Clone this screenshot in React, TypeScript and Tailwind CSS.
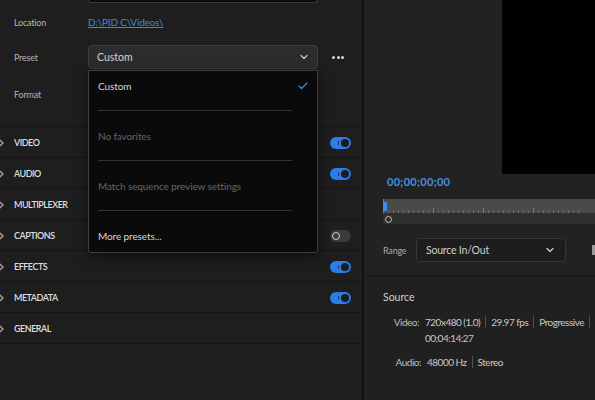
import { ChevronDown, Check } from 'lucide-react';

const sections = [
  { name: 'VIDEO', toggle: 'on' },
  { name: 'AUDIO', toggle: 'on' },
  { name: 'MULTIPLEXER', toggle: null },
  { name: 'CAPTIONS', toggle: 'off' },
  { name: 'EFFECTS', toggle: 'on' },
  { name: 'METADATA', toggle: 'on' },
  { name: 'GENERAL', toggle: null },
];

function Toggle({ on }: { on: boolean }) {
  if (on) {
    return (
      <div className="relative h-[12px] w-[21px] rounded-full bg-[#2b7de9]">
        <span className="absolute left-[8px] top-[4px] h-[4px] w-px bg-[#1c1c1c]/70" />
        <span className="absolute right-[2px] top-[2px] h-[8px] w-[8px] rounded-full bg-[#1c1c1c]" />
      </div>
    );
  }
  return (
    <div className="relative h-[12px] w-[21px] rounded-full bg-[#3b3b3b]">
      <span className="absolute left-[2px] top-[2px] h-[8px] w-[8px] rounded-full border-[1.5px] border-[#cfcfcf]" />
    </div>
  );
}

function RowChevron() {
  return (
    <svg width="9" height="12" viewBox="0 0 9 12" className="-ml-[4px] shrink-0">
      <path d="M2 1.5 L7 6 L2 10.5" fill="none" stroke="#a0a0a0" strokeWidth="1.4" />
    </svg>
  );
}

function MenuItem({ label, dim, checked }: { label: string; dim?: boolean; checked?: boolean }) {
  return (
    <div className="flex h-[20px] items-center justify-between pl-[9px] pr-[8px]">
      <span className={dim ? 'text-[10px] tracking-[-0.1px] text-[#666]' : 'text-[10px] tracking-[-0.1px] text-[#d6d6d6]'}>
        {label}
      </span>
      {checked && <Check size={12} strokeWidth={2.5} className="text-[#3b86e6]" />}
    </div>
  );
}

function MenuSep() {
  return (
    <div className="pb-[15px] pl-[9px] pr-[25px] pt-[14px]">
      <div className="h-px bg-[#333]" />
    </div>
  );
}

function Sep() {
  return <span className="mx-[5px] h-[12px] w-px bg-[#4e4e4e]" />;
}

function LeftPanel() {
  return (
    <div className="relative h-full w-[362px] shrink-0 overflow-hidden bg-[#1e1e1e]">
      <div className="ml-[88px] h-[3px] w-[230px] rounded-b-[3px] border-x border-b border-[#3a3a3a] bg-[#0c0c0c]" />
      <div className="flex h-[38px] items-center pt-[1px]">
        <span className="w-[88px] pl-[14px] text-[9px] tracking-[-0.2px] text-[#b4b4b4]">Location</span>
        <span className="text-[10px] tracking-[-0.2px] text-[#3f87dc] underline">D:\PID C\Videos\</span>
      </div>
      <div className="flex h-[32px] items-center">
        <span className="w-[88px] pl-[14px] pt-[1px] text-[9px] tracking-[-0.2px] text-[#b4b4b4]">Preset</span>
        <div className="flex h-[24px] w-[230px] items-center justify-between rounded-[4px] border border-[#3c3c3c] bg-[#2c2c2c] pl-[8px] pr-[7px]">
          <span className="pt-[1px] text-[10.5px] text-[#d2d2d2]">Custom</span>
          <ChevronDown size={12} strokeWidth={2.5} className="text-[#c8c8c8]" />
        </div>
        <div className="ml-[14px] flex gap-[1.5px]">
          <span className="h-[3px] w-[3px] rounded-full bg-[#d8d8d8]" />
          <span className="h-[3px] w-[3px] rounded-full bg-[#d8d8d8]" />
          <span className="h-[3px] w-[3px] rounded-full bg-[#d8d8d8]" />
        </div>
      </div>
      <div className="flex h-[42px] items-center pt-[1px]">
        <span className="w-[88px] pl-[14px] text-[9px] tracking-[-0.2px] text-[#b4b4b4]">Format</span>
      </div>
      <div className="h-[11px]" />
      <div className="border-t border-[#141414]">
        {sections.map((s) => (
          <div key={s.name} className="flex h-[31px] items-center border-b border-[#141414] pr-[11px] pt-[1px]">
            <RowChevron />
            <span className="ml-[9px] flex-1 text-[9px] font-semibold tracking-[-0.5px] text-[#dedede]">{s.name}</span>
            {s.toggle && <Toggle on={s.toggle === 'on'} />}
          </div>
        ))}
      </div>

      <div className="absolute left-[88px] top-[70px] h-[183px] w-[230px] rounded-b-[3px] border border-[#3e3e3e] bg-[#0a0a0a] pt-[5px] shadow-[0_4px_12px_rgba(0,0,0,0.5)]">
        <MenuItem label="Custom" checked />
        <MenuSep />
        <MenuItem label="No favorites" dim />
        <MenuSep />
        <MenuItem label="Match sequence preview settings" dim />
        <MenuSep />
        <MenuItem label="More presets..." />
      </div>
    </div>
  );
}

function Timeline() {
  const ticks = Array.from({ length: 40 }, (_, i) => i);
  return (
    <div className="relative ml-[19px] h-[25px]">
      <div className="relative h-[14px] bg-[#4a4a4a]">
        <div className="absolute bottom-0 left-0 right-0 flex h-[4px] items-end">
          {ticks.map((i) => (
            <div
              key={i}
              className={i % 10 === 0 ? 'mr-[4px] h-[5px] w-px bg-[#7a7a7a]' : 'mr-[4px] h-[3px] w-px bg-[#6a6a6a]'}
            />
          ))}
        </div>
        <div className="absolute left-0 top-[3px] h-[9px] w-[4px] rounded-[1px] bg-[#3a8ef0]" />
        <div className="absolute left-0 top-0 h-[4px] w-px bg-[#3a8ef0]" />
      </div>
      <div className="relative h-[11px] bg-[#2f2f2f]">
        <div className="absolute left-[2px] top-[3px] h-[7px] w-[7px] rounded-full border-[1.5px] border-[#bdbdbd]" />
      </div>
    </div>
  );
}

function RightPanel() {
  return (
    <div className="flex h-full flex-1 flex-col overflow-hidden bg-[#222222]">
      <div className="flex h-[174px] justify-end">
        <div className="h-full w-[93px] bg-black" />
      </div>
      <div className="flex h-[16px] items-center pl-[23px] text-[11px] font-bold tracking-[0.3px] text-[#4a8fe0]">
        00;00;00;00
      </div>
      <div className="h-[9px]" />
      <Timeline />
      <div className="h-[14px]" />
      <div className="flex h-[24px] items-center">
        <span className="w-[52px] pl-[19px] pt-[1px] text-[9px] tracking-[-0.2px] text-[#a8a8a8]">Range</span>
        <div className="flex h-[24px] w-[150px] items-center justify-between rounded-[4px] border border-[#363636] bg-[#1d1d1d] pl-[9px] pr-[9px]">
          <span className="pt-[1px] text-[10.5px] tracking-[-0.2px] text-[#d0d0d0]">Source In/Out</span>
          <ChevronDown size={12} strokeWidth={2.5} className="text-[#c8c8c8]" />
        </div>
        <div className="ml-[26px] h-[10px] w-[3px] rounded-l-[1px] bg-[#9a9a9a]" />
      </div>
      <div className="h-[13px]" />
      <div className="h-px bg-[#161616]" />
      <div className="flex-1 bg-[#202020] pl-[19px] pt-[14px] text-[#c8c8c8]">
        <div className="text-[10.5px] text-[#cfcfcf]">Source</div>
        <div className="mt-[8px] flex text-[10px] leading-[16px] tracking-[-0.5px]">
          <span className="w-[44px] pr-[6px] text-right text-[#bdbdbd]">Video:</span>
          <div className="whitespace-nowrap">
            <div className="flex items-center">
              720x480 (1.0)
              <Sep />
              29.97 fps
              <Sep />
              Progressive
              <Sep />
            </div>
            <div>00:04:14:27</div>
          </div>
        </div>
        <div className="mt-[8px] flex text-[10px] leading-[16px] tracking-[-0.5px]">
          <span className="w-[44px] pr-[6px] text-right text-[#bdbdbd]">Audio:</span>
          <div className="flex items-center">
            48000 Hz
            <Sep />
            Stereo
          </div>
        </div>
      </div>
    </div>
  );
}

export default function App() {
  return (
    <div className="flex h-[400px] w-[595px] overflow-hidden bg-[#1e1e1e] font-['Lato',sans-serif]">
      <LeftPanel />
      <div className="w-[2px] shrink-0 bg-[#111]" />
      <RightPanel />
    </div>
  );
}
